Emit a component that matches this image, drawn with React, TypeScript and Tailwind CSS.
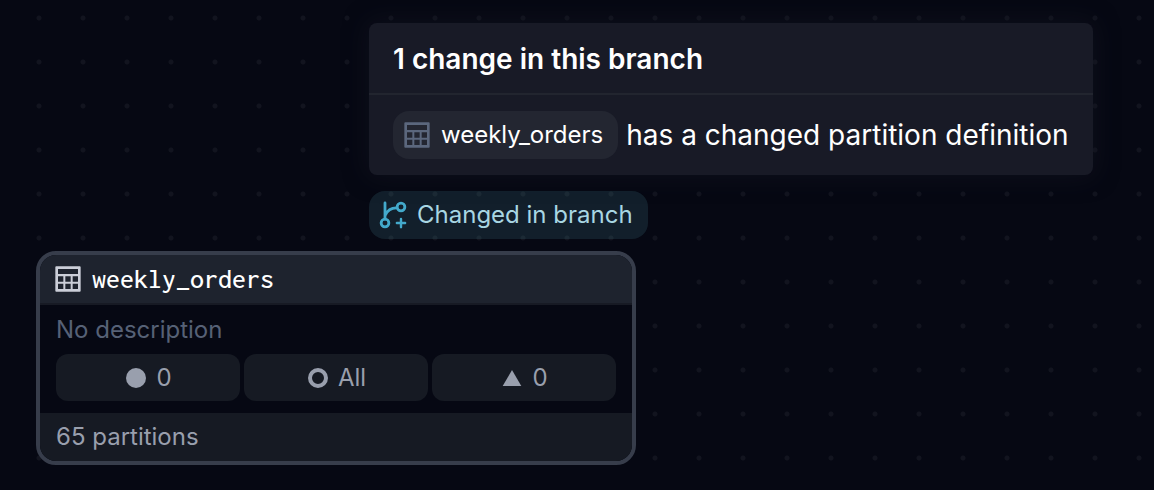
function TableIcon({ className }: { className: string }) {
  return (
    <svg viewBox="0 0 24 24" aria-hidden="true" className={`size-8 shrink-0 ${className}`}>
      <path
        fill="currentColor"
        fillRule="evenodd"
        d="M3.2 2.5h17.6a.7.7 0 0 1 .7.7v17.6a.7.7 0 0 1-.7.7H3.2a.7.7 0 0 1-.7-.7V3.2a.7.7 0 0 1 .7-.7ZM4.5 4.5v3.7h15V4.5ZM4.5 9.9v4.1h4v-4.1ZM10 9.9v4.1h4v-4.1ZM15.5 9.9v4.1h4v-4.1ZM4.5 15.5v4h4v-4ZM10 15.5v4h4v-4ZM15.5 15.5v4h4v-4Z"
      />
    </svg>
  );
}

function BranchPlusIcon() {
  return (
    <svg
      viewBox="0 0 24 24"
      aria-hidden="true"
      className="size-8 shrink-0 text-[#43a9cb]"
      fill="none"
      stroke="currentColor"
      strokeWidth="2.1"
      strokeLinecap="round"
    >
      <path d="M6 3v12M6.2 12.2Q8.5 6.6 14.6 6.6" />
      <path strokeWidth="1.8" d="M18 14.9v6.2M14.9 18h6.2" />
      <circle cx="6" cy="18" r="2.9" />
      <circle cx="18" cy="6" r="2.9" />
    </svg>
  );
}

function DotIcon() {
  return (
    <svg viewBox="0 0 20 20" aria-hidden="true" className="size-5">
      <circle cx="10" cy="10" r="10" fill="currentColor" />
    </svg>
  );
}

function RingIcon() {
  return (
    <svg viewBox="0 0 20 20" aria-hidden="true" className="size-5">
      <circle cx="10" cy="10" r="8" fill="none" stroke="currentColor" strokeWidth="4" />
    </svg>
  );
}

function TriangleIcon() {
  return (
    <svg viewBox="0 0 20 20" aria-hidden="true" className="size-5">
      <path d="M10 2 19.3 18H.7Z" fill="currentColor" />
    </svg>
  );
}

const stats = [
  { icon: <DotIcon />, value: "0" },
  { icon: <RingIcon />, value: "All" },
  { icon: <TriangleIcon />, value: "0" },
];

function ChangesPopover() {
  return (
    <section className="rounded-lg bg-[#181a26] text-[28px] text-white shadow-[0_0_24px_rgba(24,26,38,0.5)]">
      <h2 className="border-b-2 border-[#22252f] px-6 pt-4 pb-[14px] leading-10 font-semibold">
        1 change in this branch
      </h2>
      <p className="flex items-center gap-2 px-6 py-4 leading-10 whitespace-nowrap">
        <a
          href="#weekly_orders"
          className="flex h-12 items-center gap-2 rounded-2xl bg-[#232631] pr-[15px] pl-2 text-2xl"
        >
          <TableIcon className="text-[#5b677d]" />
          weekly_orders
        </a>
        has a changed partition definition
      </p>
    </section>
  );
}

function AssetNode() {
  return (
    <article className="w-[600px] overflow-hidden rounded-[20px] border-4 border-[#373d4b] bg-[#060813] text-2xl text-[#999fad]">
      <h1 className="flex h-[50px] items-center gap-2 border-b-2 border-[#171a24] bg-[#1e232e] px-3 font-['Inconsolata','Noto_Sans_Mono_CJK_SC','DejaVu_Sans_Mono',monospace] text-[28px] font-medium text-white">
        <TableIcon className="text-[#cbced8]" />
        weekly_orders
      </h1>
      <div className="px-4 pt-[9px] pb-3">
        <p className="leading-8 text-[#566176]">No description</p>
        <ul className="mt-2 grid grid-cols-3 gap-1">
          {stats.map((stat, index) => (
            <li
              key={index}
              className="flex h-[47px] items-center justify-center gap-[10px] rounded-xl bg-[#161a23] pl-0.5"
            >
              {stat.icon}
              {stat.value}
            </li>
          ))}
        </ul>
      </div>
      <footer className="bg-[#161a23] px-4 leading-[48px]">65 partitions</footer>
    </article>
  );
}

export default function App() {
  return (
    <main className="min-h-screen bg-[#060813] bg-[radial-gradient(circle,#12141f_2px,transparent_3px)] bg-[length:44px_44px] bg-[position:17px_-4px] pt-[23px] pb-6 pl-9 font-['Inter','Liberation_Sans',sans-serif]">
      <div className="ml-[333px] flex flex-col items-start gap-4">
        <ChangesPopover />
        <button
          type="button"
          className="flex h-12 items-center gap-2 rounded-2xl bg-[#5aaab8]/15 pr-[15px] pl-2 text-2xl text-[#a8d6e3]"
        >
          <BranchPlusIcon />
          Changed in branch
        </button>
      </div>
      <div className="mt-3">
        <AssetNode />
      </div>
    </main>
  );
}
